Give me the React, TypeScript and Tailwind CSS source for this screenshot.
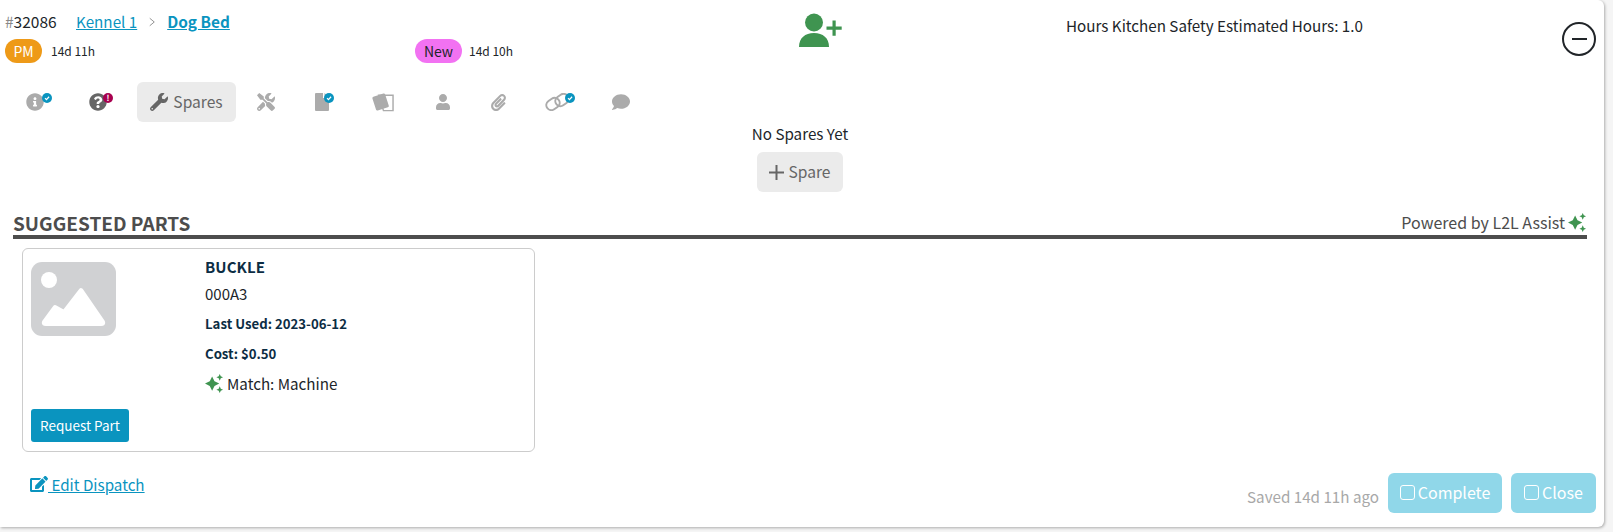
import { FaInfoCircle, FaQuestionCircle, FaWrench, FaTools, FaUser, FaPaperclip, FaComment, FaEdit } from 'react-icons/fa'

const FONT = "font-['Noto_Sans_CJK_SC','Liberation_Sans',sans-serif]"

function Sparkle({ className }: { className?: string }) {
  return (
    <svg viewBox="0 0 20 20" className={className} fill="#3f9450">
      <path d="M7.5 2.5 L10 7.5 L15 10 L10 12.5 L7.5 17.5 L5 12.5 L0 10 L5 7.5 Z" />
      <path d="M15.5 0 L16.6 2.4 L19 3.5 L16.6 4.6 L15.5 7 L14.4 4.6 L12 3.5 L14.4 2.4 Z" />
      <path d="M15.5 13 L16.6 15.4 L19 16.5 L16.6 17.6 L15.5 20 L14.4 17.6 L12 16.5 L14.4 15.4 Z" />
    </svg>
  )
}

function Dot({ tone, className }: { tone: 'check' | 'alert'; className: string }) {
  return (
    <span className={`absolute flex h-[10px] w-[10px] items-center justify-center rounded-full ${tone === 'check' ? 'bg-[#0a94bf]' : 'bg-[#a8004f]'} ${className}`}>
      {tone === 'check' ? (
        <svg viewBox="0 0 10 10" className="h-[8px] w-[8px]" fill="none" stroke="#fff" strokeWidth="1.5">
          <path d="M2.5 5.2 L4.3 7 L7.6 3.4" />
        </svg>
      ) : (
        <span className="text-[8px] leading-none font-bold text-white">!</span>
      )}
    </span>
  )
}

function Tab({ className, children }: { className: string; children: React.ReactNode }) {
  return <div className={`relative flex h-[40px] items-center justify-center ${className}`}>{children}</div>
}

function PersonPlus() {
  return (
    <svg viewBox="0 0 44 35" className="h-[35px] w-[44px]" fill="#3f9450">
      <circle cx="15" cy="9.5" r="9" />
      <path d="M0 34 C0 25 6 20 15 20 C24 20 30 25 30 34 Z" />
      <path d="M33.5 7.5 h3.2 v6 h6 v3.2 h-6 v6 h-3.2 v-6 h-6 v-3.2 h6 Z" />
    </svg>
  )
}

function Cards() {
  return (
    <svg viewBox="0 0 24 20" className="h-[20px] w-[23px]">
      <path d="M8 3 H23 V19 H13 Z" fill="#fff" stroke="#ababab" strokeWidth="1.5" />
      <rect x="3" y="2.5" width="14" height="15" rx="1.5" transform="rotate(-18 10 10)" fill="#ababab" />
    </svg>
  )
}

function LinkIcon() {
  return (
    <svg viewBox="0 0 26 18" className="h-[18px] w-[26px]" fill="none" stroke="#ababab" strokeWidth="2">
      <rect x="1" y="6" width="14" height="10" rx="5" transform="rotate(-35 8 11)" />
      <rect x="10" y="2" width="14" height="10" rx="5" transform="rotate(-35 17 7)" />
    </svg>
  )
}

function DocIcon() {
  return (
    <svg viewBox="0 0 14 18" className="h-[18px] w-[14px]" fill="#ababab">
      <path d="M1 0 H8 V5 H14 V17 a1 1 0 0 1 -1 1 H1 a1 1 0 0 1 -1 -1 V1 a1 1 0 0 1 1 -1 Z" />
      <path d="M9.5 0 L14 4 H9.5 Z" />
    </svg>
  )
}

function ImagePlaceholder() {
  return (
    <svg viewBox="0 0 85 74" className="h-[74px] w-[85px]">
      <rect width="85" height="74" rx="11" fill="#d0d1d3" />
      <circle cx="18" cy="18" r="8" fill="#fff" />
      <path d="M13 60 L24 45 L33 50 L50 28 L72 60 Q73 62 70 62 H15 Q12 62 13 60 Z" fill="#fff" stroke="#fff" strokeWidth="4" strokeLinejoin="round" />
    </svg>
  )
}

function Check() {
  return <span className="mr-[3px] inline-block h-[15px] w-[15px] rounded-[3px] border border-white" />
}

export default function App() {
  return (
    <div className={`h-[532px] w-[1613px] overflow-hidden bg-[#f5f5f5] text-[#212529] ${FONT}`}>
      <div className="flex h-[527px] w-[1604px] flex-col rounded-br-[6px] rounded-tr-[6px] bg-white shadow-[1px_1px_3px_rgba(0,0,0,0.3)]">
        {/* header */}
        <div className="flex h-[82px]">
          <div className="w-[799px] pl-[5px]">
            <div className="flex h-[39px] items-center pt-[4px] text-[15.5px]">
              <span className="w-[71px]"><span className="text-[#888]">#</span>32086</span>
              <a className="text-[15.2px] text-[#0a94bf] underline">Kennel 1</a>
              <svg viewBox="0 0 8 12" className="mx-[12px] h-[10px] w-[6px]" fill="none" stroke="#888" strokeWidth="1.2">
                <path d="M1 1 L7 6 L1 11" />
              </svg>
              <a className="text-[15.4px] font-bold text-[#0a94bf] underline">Dog Bed</a>
            </div>
            <div className="flex h-[24px] items-center text-[12px]">
              <span className="flex h-[24px] w-[37px] items-center justify-center rounded-full bg-[#ee9a18] text-[14px] text-white">PM</span>
              <span className="ml-[9px] w-[364px]">14d 11h</span>
              <span className="flex h-[24px] w-[47px] items-center justify-center rounded-full bg-[#f272f2] text-[14px]">New</span>
              <span className="ml-[7px]">14d 10h</span>
            </div>
          </div>
          <div className="w-[267px] pt-[13px]"><PersonPlus /></div>
          <div className="w-[496px] pt-[15px] text-[15.2px] leading-[20px]">Hours Kitchen Safety Estimated Hours: 1.0</div>
          <div className="pt-[22px]">
            <div className="flex h-[34px] w-[34px] items-center justify-center rounded-full border-2 border-[#212529]">
              <span className="h-[2px] w-[15px] bg-[#212529]" />
            </div>
          </div>
        </div>

        {/* tabs */}
        <div className="flex pl-[9px]">
          <Tab className="w-[60px] pr-[8px]">
            <FaInfoCircle size={18} color="#ababab" />
            <Dot tone="check" className="left-[33px] top-[11px]" />
          </Tab>
          <Tab className="w-[68px] pr-[11px]">
            <FaQuestionCircle size={18} color="#666" />
            <Dot tone="alert" className="left-[34px] top-[11px]" />
          </Tab>
          <Tab className="w-[99px] gap-[5px] rounded-[6px] bg-[#ebebeb] text-[15.6px] text-[#666]">
            <FaWrench size={18} color="#666" />
            <span>Spares</span>
          </Tab>
          <Tab className="w-[60px]"><FaTools size={18} color="#ababab" /></Tab>
          <Tab className="w-[59px] pr-[8px]">
            <DocIcon />
            <Dot tone="check" className="left-[28px] top-[11px]" />
          </Tab>
          <Tab className="w-[59px] pr-[4px]"><Cards /></Tab>
          <Tab className="w-[58px]"><FaUser size={16} color="#ababab" /></Tab>
          <Tab className="w-[57px] pr-[4px]"><FaPaperclip size={17} color="#ababab" /></Tab>
          <Tab className="w-[61px] pr-[4px]">
            <LinkIcon />
            <Dot tone="check" className="left-[36px] top-[11px]" />
          </Tab>
          <Tab className="w-[61px]"><FaComment size={18} color="#ababab" /></Tab>
        </div>

        {/* empty state */}
        <div className="flex w-[1600px] flex-col items-center">
          <div className="h-[30px] pt-[1px] text-[15.2px] leading-[20px]">No Spares Yet</div>
          <div className="flex h-[40px] w-[86px] items-center justify-center gap-[4px] rounded-[6px] bg-[#ebebeb] text-[15.6px] text-[#666]">
            <svg viewBox="0 0 15 15" className="h-[15px] w-[15px]" stroke="#666" strokeWidth="2">
              <path d="M7.5 0 V15 M0 7.5 H15" />
            </svg>
            <span>Spare</span>
          </div>
        </div>

        {/* suggested parts */}
        <div className="mt-[18px] ml-[13px] w-[1574px] border-b-4 border-[#4d4d4d]">
          <div className="flex h-[25px] items-start justify-between">
            <span className="text-[19px] leading-[25px] font-bold text-[#4d4d4d]">SUGGESTED PARTS</span>
            <span className="flex items-center gap-[3px] text-[16px] leading-[24px] text-[#4d4d4d]">
              Powered by L2L Assist
              <Sparkle className="h-[19px] w-[19px]" />
            </span>
          </div>
        </div>

        <div className="mt-[9px] ml-[22px] flex h-[204px] w-[513px] flex-col justify-between rounded-[6px] border border-[#ccc] pt-[13px] pb-[9px] pl-[8px]">
          <div className="flex">
            <div className="w-[174px]"><ImagePlaceholder /></div>
            <div className="-mt-[6px] text-[#0c2d44]">
              <div className="h-[27px] text-[15px] leading-[22px] font-bold tracking-[0.1px]">BUCKLE</div>
              <div className="h-[30px] text-[15px] leading-[22px] text-[#212529]">000A3</div>
              <div className="h-[30px] text-[13.2px] leading-[22px] font-bold">Last Used: 2023-06-12</div>
              <div className="h-[29px] text-[13.2px] leading-[22px] font-bold">Cost: $0.50</div>
              <div className="flex items-center gap-[3px] text-[15.2px] leading-[22px] text-[#212529]">
                <Sparkle className="h-[19px] w-[19px]" />
                Match: Machine
              </div>
            </div>
          </div>
          <div className="flex h-[33px] w-[98px] items-center justify-center rounded-[3px] bg-[#0a94bf] text-[13.5px] text-white">Request Part</div>
        </div>

        {/* footer */}
        <div className="mt-[21px] flex items-start justify-between pr-[8px] pl-[30px]">
          <a className="mt-[1px] flex items-center text-[15.2px] leading-[20px] text-[#0a94bf] underline">
            <FaEdit size={18} color="#0a94bf" />
            <span className="whitespace-pre"> Edit Dispatch</span>
          </a>
          <div className="flex items-center">
            <span className="mr-[9px] mt-[7px] text-[15.2px] text-[#a8a8a8]">Saved 14d 11h ago</span>
            <div className="mr-[9px] flex h-[40px] w-[114px] items-center justify-center rounded-[6px] bg-[#90d7e9] pb-[2px] text-[16px] text-white"><Check />Complete</div>
            <div className="flex h-[40px] w-[85px] items-center justify-center rounded-[6px] bg-[#90d7e9] pb-[2px] text-[16px] text-white"><Check />Close</div>
          </div>
        </div>
      </div>
    </div>
  )
}
